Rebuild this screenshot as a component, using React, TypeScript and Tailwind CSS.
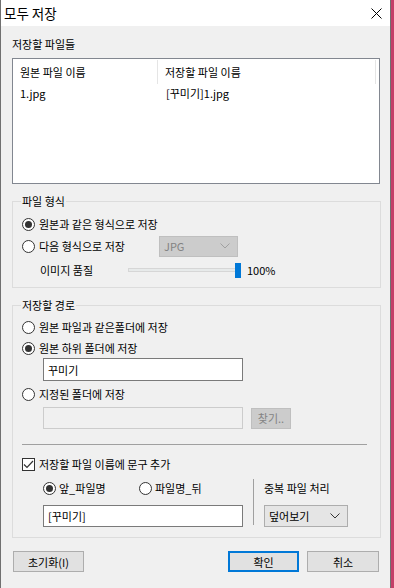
import React from 'react';

const font = { fontFamily: '"Noto Sans CJK KR", "Noto Sans", sans-serif' };

function Radio({ checked }: { checked?: boolean }) {
  return (
    <span className="w-[13px] h-[13px] shrink-0 rounded-full border border-[#333333] bg-white flex items-center justify-center">
      {checked && <span className="w-[7px] h-[7px] rounded-full bg-[#333333]" />}
    </span>
  );
}

function Chevron({ color }: { color: string }) {
  return (
    <svg width="10" height="6" viewBox="0 0 10 6" fill="none">
      <path d="M0.5 0.5 L5 5 L9.5 0.5" stroke={color} strokeWidth="1" />
    </svg>
  );
}

export default function App() {
  return (
    <div className="w-[394px] h-[588px] bg-[#c43f68] flex text-[11px] leading-[16px] text-black" style={font}>
      <div className="w-[391px] h-full flex flex-col bg-[#f0f0f0] border-l border-r border-[#707070] overflow-hidden">
        {/* 타이틀 바 */}
        <div className="h-[26px] shrink-0 bg-white flex items-center justify-between pl-[3px] pr-[8px]">
          <span className="text-[13.5px] leading-[18px]">모두 저장</span>
          <svg width="11" height="11" viewBox="0 0 11 11">
            <path d="M0.5 0.5 L10.5 10.5 M10.5 0.5 L0.5 10.5" stroke="#000" strokeWidth="1" />
          </svg>
        </div>

        <div className="flex flex-col pl-[11px] w-[380px]">
          {/* 저장할 파일들 */}
          <div className="mt-[10px] h-[16px]">저장할 파일들</div>
          <div className="mt-[6px] w-[368px] h-[126px] bg-white border border-[#828790] flex flex-col">
            <div className="h-[24px] flex items-center mt-[1px]">
              <div className="w-[145px] h-full pl-[7px] flex items-center border-r border-[#e5e5e5]">원본 파일 이름</div>
              <div className="w-[218px] h-full pl-[7px] flex items-center border-r border-[#e5e5e5]">저장할 파일 이름</div>
            </div>
            <div className="h-[18px] flex items-center">
              <div className="w-[146px] pl-[7px]">1.jpg</div>
              <div className="pl-[7px]">[꾸미기]1.jpg</div>
            </div>
          </div>

          {/* 파일 형식 */}
          <fieldset className="mt-[9px] w-[369px] border border-[#dcdcdc] pb-[9px]">
            <legend className="ml-[8px] px-[1px] leading-[16px]">파일 형식</legend>
            <div className="mt-[5px] h-[20px] pl-[9px] flex items-center gap-[4px]">
              <Radio checked />
              <span>원본과 같은 형식으로 저장</span>
            </div>
            <div className="mt-[1px] h-[22px] pl-[9px] flex items-center">
              <Radio />
              <span className="ml-[4px] w-[120px]">다음 형식으로 저장</span>
              <div className="w-[79px] h-[21px] bg-[#cccccc] border border-[#bfbfbf] flex items-center justify-between pl-[4px] pr-[7px] text-[#838383]">
                <span>JPG</span>
                <Chevron color="#a0a0a0" />
              </div>
            </div>
            <div className="mt-[5px] h-[16px] flex items-center">
              <span className="ml-[27px] w-[88px]">이미지 품질</span>
              <div className="relative w-[113px] h-[15px] flex items-center">
                <div className="w-[110px] h-[4px] bg-[#e7eaea] border border-[#d6d6d6]" />
                <div className="absolute left-[107px] top-0 w-[6px] h-[15px] bg-[#0078d7]" />
              </div>
              <span className="ml-[6px]">100%</span>
            </div>
          </fieldset>

          {/* 저장할 경로 */}
          <fieldset className="mt-[9px] w-[369px] border border-[#dcdcdc] pb-[10px]">
            <legend className="ml-[8px] px-[1px] leading-[16px]">저장할 경로</legend>
            <div className="mt-[4px] h-[20px] pl-[9px] flex items-center gap-[4px]">
              <Radio />
              <span>원본 파일과 같은폴더에 저장</span>
            </div>
            <div className="mt-[1px] h-[20px] pl-[9px] flex items-center gap-[4px]">
              <Radio checked />
              <span>원본 하위 폴더에 저장</span>
            </div>
            <div className="ml-[30px] w-[200px] h-[23px] bg-white border border-[#7a7a7a] flex items-center pl-[4px]">꾸미기</div>
            <div className="mt-[3px] h-[20px] pl-[9px] flex items-center gap-[4px]">
              <Radio />
              <span>지정된 폴더에 저장</span>
            </div>
            <div className="mt-[3px] ml-[30px] flex items-center gap-[8px]">
              <div className="w-[200px] h-[22px] bg-[#f0f0f0] border border-[#cccccc]" />
              <div className="w-[40px] h-[21px] bg-[#cccccc] border border-[#bfbfbf] flex items-center justify-center text-[#838383]">찾기..</div>
            </div>
            <div className="mt-[15px] ml-[9px] w-[345px] h-px bg-[#a0a0a0]" />
            <div className="mt-[9px] h-[20px] pl-[9px] flex items-center gap-[4px]">
              <span className="w-[13px] h-[13px] shrink-0 border border-[#333333] bg-white flex items-center justify-center">
                <svg width="11" height="9" viewBox="0 0 11 9" fill="none">
                  <path d="M1 4.5 L4 7.5 L10 1" stroke="#333333" strokeWidth="1.2" />
                </svg>
              </span>
              <span>저장할 파일 이름에 문구 추가</span>
            </div>
            <div className="mt-[4px] flex">
              <div className="ml-[30px] w-[210px] flex flex-col">
                <div className="h-[20px] flex items-center">
                  <Radio checked />
                  <span className="ml-[3px] w-[80px]">앞_파일명</span>
                  <Radio />
                  <span className="ml-[3px]">파일명_뒤</span>
                </div>
                <div className="mt-[7px] w-[200px] h-[22px] bg-white border border-[#7a7a7a] flex items-center pl-[4px]">[꾸미기]</div>
              </div>
              <div className="mt-[1px] w-px h-[46px] bg-[#a0a0a0]" />
              <div className="ml-[10px] flex flex-col">
                <div className="h-[20px] flex items-center">중복 파일 처리</div>
                <div className="mt-[7px] w-[84px] h-[22px] bg-[#e5e5e5] border border-[#adadad] flex items-center justify-between pl-[4px] pr-[7px]">
                  <span>덮어보기</span>
                  <Chevron color="#333333" />
                </div>
              </div>
            </div>
          </fieldset>

          {/* 하단 버튼 */}
          <div className="mt-[13px] flex items-center pl-[1px]">
            <button className="w-[71px] h-[21px] bg-[#e1e1e1] border border-[#adadad] flex items-center justify-center">초기화(I)</button>
            <button className="ml-[144px] w-[71px] h-[21px] bg-[#e1e1e1] border-2 border-[#0078d7] flex items-center justify-center">확인</button>
            <button className="ml-[8px] w-[72px] h-[21px] bg-[#e1e1e1] border border-[#adadad] flex items-center justify-center">취소</button>
          </div>
        </div>
      </div>
    </div>
  );
}
